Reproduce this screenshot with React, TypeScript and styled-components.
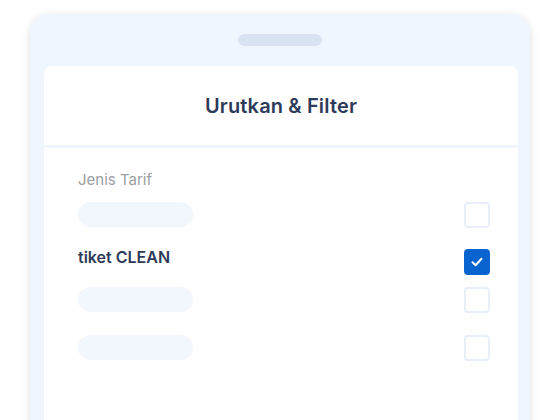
import React from "react";
import styled, { createGlobalStyle } from "styled-components";

const Global = createGlobalStyle`
  html, body { margin: 0; padding: 0; background: #ffffff; }
  body { font-family: Inter, "Noto Sans", sans-serif; -webkit-font-smoothing: antialiased; }
  #root { height: 420px; overflow: hidden; }
`;

const Page = styled.div`
  height: 420px;
  padding: 14px 30px 0 30px;
  box-sizing: border-box;
  overflow: hidden;
`;

const Frame = styled.div`
  height: 440px;
  background: #f0f6fe;
  border-radius: 20px 20px 0 0;
  box-shadow: 0 2px 8px rgba(60, 70, 90, 0.18);
  padding: 20px 12px 0 14px;
  box-sizing: border-box;
  display: flex;
  flex-direction: column;
  align-items: stretch;
`;

const Handle = styled.div`
  align-self: center;
  width: 84px;
  height: 12px;
  border-radius: 6px;
  background: #d9e3f1;
  margin-right: 2px;
`;

const Card = styled.div`
  margin-top: 20px;
  flex: 1;
  background: #ffffff;
  border-radius: 8px 8px 0 0;
  display: flex;
  flex-direction: column;
`;

const Header = styled.div`
  height: 79px;
  display: flex;
  align-items: center;
  justify-content: center;
  border-bottom: 3px solid #eef5fd;
`;

const Title = styled.h1`
  margin: 0;
  font-size: 20px;
  line-height: 24px;
  font-weight: 600;
  color: #2e3a59;
  letter-spacing: 0.15px;
`;

const Body = styled.div`
  padding: 22px 28px 0 34px;
  display: flex;
  flex-direction: column;
`;

const SectionLabel = styled.div`
  font-size: 15px;
  line-height: 20px;
  color: #9b9ea3;
  font-weight: 400;
`;

const Row = styled.div<{ $top: number }>`
  margin-top: ${(p) => p.$top}px;
  display: flex;
  align-items: flex-start;
  justify-content: space-between;
`;

const Placeholder = styled.div`
  width: 115px;
  height: 25px;
  border-radius: 13px;
  background: #f2f6fd;
`;

const OptionText = styled.div`
  font-size: 16px;
  line-height: 16px;
  font-weight: 600;
  color: #2e3a59;
`;

const Box = styled.div<{ $checked?: boolean }>`
  width: 26px;
  height: 26px;
  box-sizing: border-box;
  border-radius: 4px;
  border: 2px solid ${(p) => (p.$checked ? "#0a64d0" : "#e9eff8")};
  background: ${(p) => (p.$checked ? "#0a64d0" : "#ffffff")};
  display: flex;
  align-items: center;
  justify-content: center;
`;

const Check = () => (
  <svg width="14" height="14" viewBox="0 0 14 14" fill="none">
    <path d="M2.5 7.2 L5.6 10.2 L11.5 3.8" stroke="#ffffff" strokeWidth="2" strokeLinecap="round" strokeLinejoin="round" />
  </svg>
);

export default function App() {
  return (
    <>
      <Global />
      <Page>
        <Frame>
          <Handle />
          <Card>
            <Header>
              <Title>Urutkan &amp; Filter</Title>
            </Header>
            <Body>
              <SectionLabel>Jenis Tarif</SectionLabel>
              <Row $top={12}>
                <Placeholder />
                <Box />
              </Row>
              <Row $top={21}>
                <OptionText>tiket CLEAN</OptionText>
                <Box $checked>
                  <Check />
                </Box>
              </Row>
              <Row $top={12}>
                <Placeholder />
                <Box />
              </Row>
              <Row $top={22}>
                <Placeholder />
                <Box />
              </Row>
            </Body>
          </Card>
        </Frame>
      </Page>
    </>
  );
}
